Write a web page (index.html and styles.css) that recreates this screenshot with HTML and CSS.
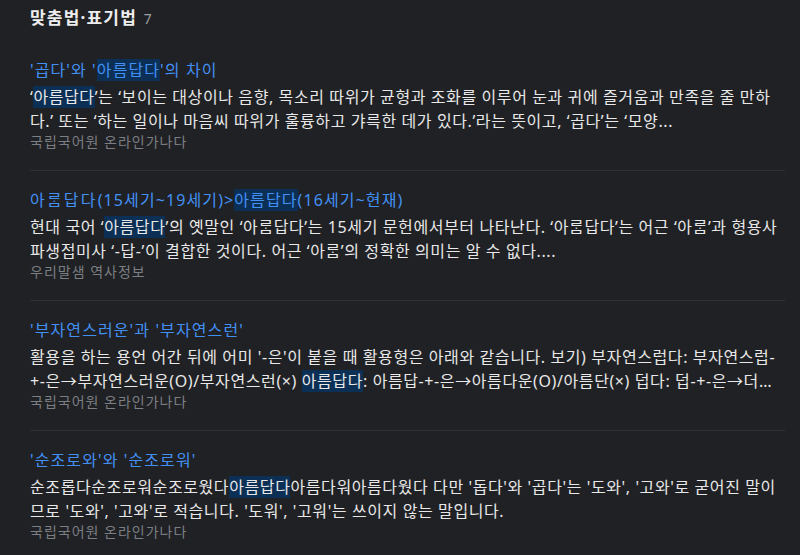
FILE: index.html
```html
<!DOCTYPE html>
<html lang="ko">
<head>
<meta charset="utf-8">
<title>맞춤법·표기법</title>
<link rel="stylesheet" href="styles.css">
</head>
<body>
<div class="page">
  <h2 class="heading">맞춤법·표기법 <span class="count">7</span></h2>
  <ul class="results">
    <li class="item">
      <div class="title">'곱다'와 '<mark>아름답다</mark>'의 차이</div>
      <p class="body"><span>‘<mark>아름답다</mark>’는 ‘보이는 대상이나 음향, 목소리 따위가 균형과 조화를 이루어 눈과 귀에 즐거움과 만족을 줄 만하다.’ 또는 ‘하는 일이나 마음씨 따위가 훌륭하고 갸륵한 데가 있다.’라는 뜻이고, ‘곱다’는 ‘모양...</span></p>
      <div class="source">국립국어원 온라인가나다</div>
    </li>
    <li class="item">
      <div class="title"><span class="old">아ᄅᆞᆷ답다</span>(15세기~19세기)&gt;<mark>아름답다</mark>(16세기~현재)</div>
      <p class="body"><span>현대 국어 ‘<mark>아름답다</mark>’의 옛말인 ‘아ᄅᆞᆷ답다’는 15세기 문헌에서부터 나타난다. ‘아ᄅᆞᆷ답다’는 어근 ‘아ᄅᆞᆷ’과 형용사파생접미사 ‘-답-’이 결합한 것이다. 어근 ‘아ᄅᆞᆷ’의 정확한 의미는 알 수 없다....</span></p>
      <div class="source">우리말샘 역사정보</div>
    </li>
    <li class="item">
      <div class="title">'부자연스러운'과 '부자연스런'</div>
      <p class="body"><span>활용을 하는 용언 어간 뒤에 어미 '-은'이 붙을 때 활용형은 아래와 같습니다. 보기) 부자연스럽다: 부자연스럽-+-은→부자연스러운(O)/부자연스런(×) <mark>아름답다</mark>: 아름답-+-은→아름다운(O)/아름단(×) 덥다: 덥-+-은→더운…</span></p>
      <div class="source">국립국어원 온라인가나다</div>
    </li>
    <li class="item">
      <div class="title">'순조로와'와 '순조로워'</div>
      <p class="body"><span>순조롭다순조로워순조로웠다<mark>아름답다</mark>아름다워아름다웠다 다만 '돕다'와 '곱다'는 '도와', '고와'로 굳어진 말이므로 '도와', '고와'로 적습니다. '도워', '고워'는 쓰이지 않는 말입니다.</span></p>
      <div class="source">국립국어원 온라인가나다</div>
    </li>
  </ul>
</div>
</body>
</html>
```

FILE: styles.css
```css
html, body {
  margin: 0;
  padding: 0;
  background: #202124;
}
body {
  font-family: "Noto Sans", "Noto Sans CJK KR", sans-serif;
  color: #e8e8e8;
}
.page {
  padding: 6px 15px 0 30px;
}
.heading {
  margin: 0 0 10px 0;
  font-size: 17px;
  line-height: 24px;
  font-weight: 700;
  letter-spacing: 1.2px;
  color: #ededed;
}
.count {
  font-size: 14px;
  font-weight: 400;
  letter-spacing: 0;
  color: #9aa0a6;
  margin-left: 1px;
}
.results {
  list-style: none;
  margin: 0;
  padding: 0;
}
.item {
  padding: 18px 0 19px 0;
  border-top: 1px solid #2f3033;
}
.item:first-child {
  border-top: none;
}
.title {
  font-size: 16px;
  line-height: 22px;
  letter-spacing: 1.1px;
  color: #4290f4;
}
.old {
  letter-spacing: 2.2px;
}
.body {
  margin: 4px 0 0 0;
  font-size: 16px;
  line-height: 24px;
  letter-spacing: 0.6px;
  color: #e8e8e8;
  display: -webkit-box;
  -webkit-box-orient: vertical;
  -webkit-line-clamp: 2;
  overflow: hidden;
}
mark {
  background: #0c2f55;
  color: inherit;
}
.source {
  font-size: 14px;
  line-height: 18px;
  letter-spacing: 1px;
  color: #7b7e83;
}
```
